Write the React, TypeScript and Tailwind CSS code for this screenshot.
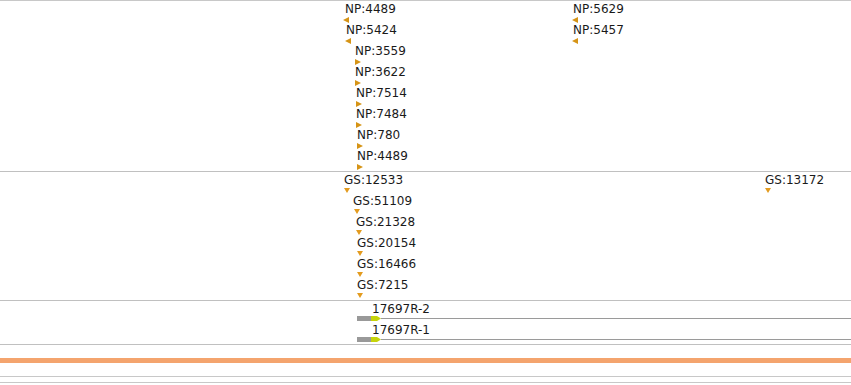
type Dir = "left" | "right" | "down";
type Feature = { label: string; x: number; tri: number; dir: Dir };

const npRows: Feature[][] = [
  [
    { label: "NP:4489", x: 345, tri: 343, dir: "left" },
    { label: "NP:5629", x: 573, tri: 572, dir: "left" },
  ],
  [
    { label: "NP:5424", x: 346, tri: 345, dir: "left" },
    { label: "NP:5457", x: 573, tri: 572, dir: "left" },
  ],
  [{ label: "NP:3559", x: 355, tri: 355, dir: "right" }],
  [{ label: "NP:3622", x: 355, tri: 355, dir: "right" }],
  [{ label: "NP:7514", x: 356, tri: 356, dir: "right" }],
  [{ label: "NP:7484", x: 356, tri: 356, dir: "right" }],
  [{ label: "NP:780", x: 357, tri: 357, dir: "right" }],
  [{ label: "NP:4489", x: 357, tri: 357, dir: "right" }],
];

const gsRows: Feature[][] = [
  [
    { label: "GS:12533", x: 344, tri: 344, dir: "down" },
    { label: "GS:13172", x: 765, tri: 765, dir: "down" },
  ],
  [{ label: "GS:51109", x: 353, tri: 354, dir: "down" }],
  [{ label: "GS:21328", x: 356, tri: 356, dir: "down" }],
  [{ label: "GS:20154", x: 357, tri: 357, dir: "down" }],
  [{ label: "GS:16466", x: 357, tri: 357, dir: "down" }],
  [{ label: "GS:7215", x: 357, tri: 357, dir: "down" }],
];

const genes = ["17697R-2", "17697R-1"];

function Marker({ dir }: { dir: Dir }) {
  if (dir === "down")
    return (
      <svg width="6" height="5" viewBox="0 0 6 5">
        <polygon points="0,0 6,0 3,5" fill="#e39b1f" />
      </svg>
    );
  return (
    <svg width="6" height="6" viewBox="0 0 6 6">
      <polygon points={dir === "left" ? "6,0 6,6 0,3" : "0,0 0,6 6,3"} fill="#d69416" />
    </svg>
  );
}

function Row({ items }: { items: Feature[] }) {
  return (
    <div className="relative h-[21px]">
      {items.map((f) => (
        <div key={f.label + f.x}>
          <span className="absolute top-[1px] leading-[14px]" style={{ left: f.x }}>
            {f.label}
          </span>
          <span className="absolute top-[16px] flex" style={{ left: f.tri }}>
            <Marker dir={f.dir} />
          </span>
        </div>
      ))}
    </div>
  );
}

function Gene({ label }: { label: string }) {
  return (
    <div className="flex h-[21px] flex-col pl-[357px] pt-px">
      <span className="pl-[15px] leading-[14px]">{label}</span>
      <div className="flex h-[5px] items-center">
        <div className="h-[5px] w-[14px] bg-[#999999]" />
        <div className="h-[5px] w-[6px] bg-[#c6d40a]" />
        <svg width="4" height="5" viewBox="0 0 4 5" className="shrink-0">
          <polygon points="0,0 4,2.5 0,5" fill="#c6d40a" />
        </svg>
        <div className="h-px flex-1 bg-[#9a9a9a]" />
      </div>
    </div>
  );
}

export default function App() {
  return (
    <div
      className="h-[385px] w-[851px] overflow-hidden bg-white text-[12px] text-[#1a1a1a]"
      style={{ fontFamily: '"DejaVu Sans", sans-serif' }}
    >
      <div className="h-[171px] border-t border-[#c8c8c8]">
        {npRows.map((r, i) => (
          <Row key={i} items={r} />
        ))}
      </div>
      <div className="h-[129px] border-t border-[#c0c0c0]">
        {gsRows.map((r, i) => (
          <Row key={i} items={r} />
        ))}
      </div>
      <div className="h-[45px] border-y border-[#c0c0c0]">
        {genes.map((g) => (
          <Gene key={g} label={g} />
        ))}
      </div>
      <div className="mt-[13px] h-[5px] bg-[#f4a46e]" />
      <div className="mt-[13px] h-px bg-[#c8c8c8]" />
      <div className="mt-[5px] h-px bg-[#c8c8c8]" />
    </div>
  );
}
